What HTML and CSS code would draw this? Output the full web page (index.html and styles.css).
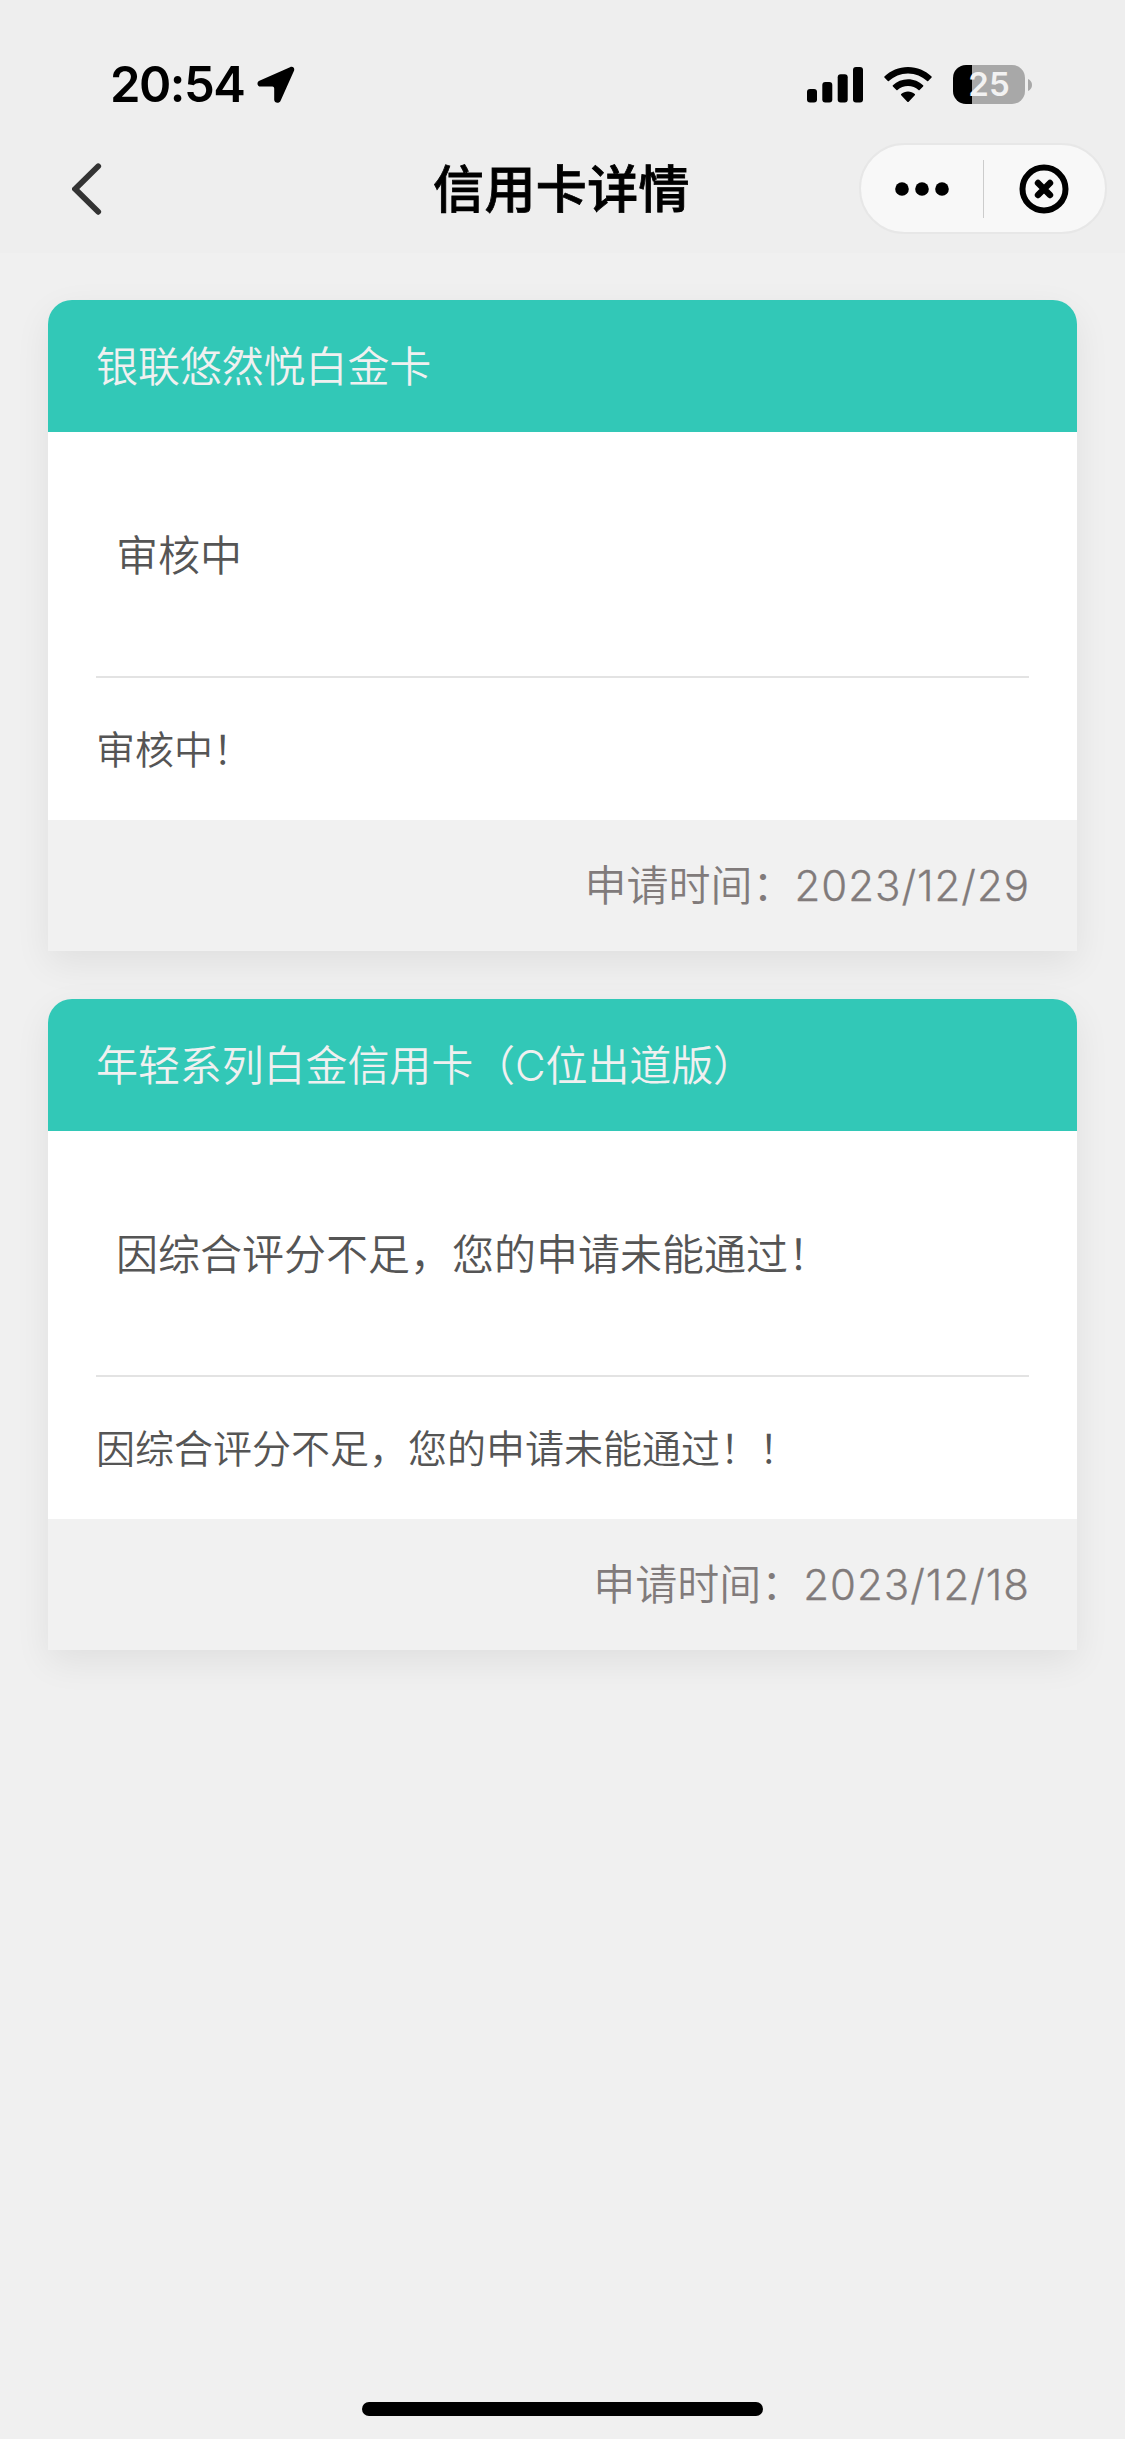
FILE: index.html
```html
<!DOCTYPE html>
<html lang="zh-CN">
<head>
<meta charset="utf-8">
<title>信用卡详情</title>
<link rel="stylesheet" href="styles.css">
</head>
<body>
<div class="screen">
  <header class="top">
    <div class="status-bar">
      <div class="status-left">
        <span class="time">20:54</span>
        <svg class="location" width="38" height="38" viewBox="0 0 38 38"><path d="M2.4 14.8 33 1.2C35.800 0 38 2 37 4.800L23.600 34.800C22.200 38 17.200 37.300 17.200 33.800V22.400Q17.200 20.600 15.400 20.600H3.600C0 20.600-.6 16.100 2.400 14.800Z"/></svg>
      </div>
      <div class="status-right">
        <svg width="56" height="36" viewBox="0 0 56 36"><rect x="0" y="22" width="10" height="13.500" rx="3"/><rect x="15.300" y="15" width="10" height="20.500" rx="3"/><rect x="30.700" y="7.300" width="10" height="28.200" rx="3"/><rect x="46" y="0" width="10" height="35.500" rx="3"/></svg>
        <svg width="48" height="36" viewBox="0 0 48 36"><path d="M24 0C14.800 0 6.500 3.700.4 9.600Q0 10.100.4 10.600L3.800 14.100Q4.300 14.600 4.900 14.100C9.900 9.400 16.600 6.500 24 6.500S38.100 9.400 43.100 14.100Q43.700 14.600 44.200 14.100L47.600 10.600Q48 10.100 47.600 9.600C41.500 3.700 33.200 0 24 0Z"/><path d="M24 12.300C18.200 12.300 12.900 14.600 8.900 18.300Q8.300 18.800 8.900 19.400L12.400 22.900Q12.900 23.400 13.500 22.900C16.300 20.400 20 18.900 24 18.900S31.700 20.400 34.500 22.900Q35.100 23.400 35.600 22.900L39.100 19.400Q39.700 18.800 39.100 18.300C35.100 14.600 29.800 12.300 24 12.300Z"/><path d="M24 24.500C21.400 24.500 19 25.500 17.200 27.100Q16.600 27.700 17.200 28.300L23.300 34.700Q24 35.400 24.700 34.700L30.800 28.300Q31.400 27.700 30.800 27.100C29 25.500 26.600 24.500 24 24.500Z"/></svg>
        <div class="battery">
          <div class="battery-body">25</div>
          <svg width="4" height="12" viewBox="0 0 4 12"><path d="M0 0Q4 1.800 4 6T0 12Z" fill="#a8a8a8"/></svg>
        </div>
      </div>
    </div>
    <nav class="nav">
      <svg class="back" width="30" height="52" viewBox="0 0 30 52"><path d="M26.200 3.300 3.200 26l23 22.800" fill="none" stroke="#333" stroke-width="5.800" stroke-linecap="round"/></svg>
      <h1 class="nav-title">信用卡详情</h1>
      <div class="capsule">
        <div class="capsule-item"><svg width="54" height="14" viewBox="0 0 54 14"><circle cx="7" cy="7" r="6.800"/><circle cx="27" cy="7" r="6.800"/><circle cx="47" cy="7" r="6.800"/></svg></div>
        <div class="capsule-item"><svg width="50" height="50" viewBox="0 0 50 50" fill="none" stroke="#000" stroke-linecap="round"><circle cx="25" cy="25" r="21.500" stroke-width="6"/><path d="m19 19 12 12m0-12L19 31" stroke-width="6.400"/></svg></div>
      </div>
    </nav>
  </header>
  <main class="cards">
    <section class="card">
      <h2 class="card-head">银联悠然悦白金卡</h2>
      <div class="card-body">
        <p class="result">审核中</p>
        <p class="detail">审核中！</p>
      </div>
      <div class="card-foot">申请时间：<span class="date">2023/12/29</span></div>
    </section>
    <section class="card">
      <h2 class="card-head">年轻系列白金信用卡（<span class="latin">C</span>位出道版）</h2>
      <div class="card-body">
        <p class="result">因综合评分不足，您的申请未能通过！</p>
        <p class="detail">因综合评分不足，您的申请未能通过！！</p>
      </div>
      <div class="card-foot">申请时间：<span class="date">2023/12/18</span></div>
    </section>
  </main>
  <div class="home-bar"></div>
</div>
</body>
</html>
```
FILE: styles.css
```css
* { box-sizing: border-box; margin: 0; padding: 0; }
body {
  background: #f0f0f0;
  font-family: "Noto Sans CJK SC", sans-serif;
  font-weight: 350;
  color: #555;
}
svg { display: block; flex: none; }
.screen {
  width: 1125px;
  height: 2439px;
  display: flex;
  flex-direction: column;
  align-items: center;
}
.top { width: 100%; height: 253px; background: #eee; flex: none; }
.status-bar {
  height: 143px;
  padding: 26px 93px 0 110px;
  display: flex;
  justify-content: space-between;
  align-items: center;
}
.status-left, .status-right, .battery { display: flex; align-items: center; }
.status-left { gap: 12px; }
.status-right { gap: 21px; }
.time {
  font: 600 49px/60px Inter, sans-serif;
  letter-spacing: -1.500px;
  color: #000;
  width: 135px;
  white-space: nowrap;
}
.battery { gap: 3px; }
.battery-body {
  width: 72px;
  height: 39px;
  border-radius: 13px;
  background: linear-gradient(90deg, #000 18.500px, #a8a8a8 18.500px);
  color: #f2f2f2;
  font: 600 33px/39px Inter, sans-serif;
  text-align: center;
}
.nav {
  height: 91px;
  padding: 0 18px 0 72px;
  display: grid;
  grid-template-columns: 246px 1fr 248px;
  align-items: center;
}
.nav-title {
  height: 91px;
  font-size: 51px;
  line-height: 86px;
  letter-spacing: .4px;
  font-weight: 500;
  -webkit-text-stroke: .8px #000;
  color: #000;
  width: 260px;
  margin-left: 115px;
  white-space: nowrap;
}
.capsule {
  height: 91px;
  border: 2px solid #e7e7e7;
  border-radius: 46px;
  background: #f8f8f8;
  display: flex;
  align-items: center;
}
.capsule-item { flex: 1; height: 58px; display: flex; align-items: center; justify-content: center; }
.capsule-item + .capsule-item { border-left: 1px solid #ccc; }
.cards {
  width: 1029px;
  margin-top: 47px;
  display: flex;
  flex-direction: column;
  gap: 48px;
}
.card {
  border-radius: 24px 24px 0 0;
  box-shadow: 0 12px 36px rgba(0, 0, 0, .07);
}
.card-head {
  height: 132px;
  padding: 0 48px;
  border-radius: 24px 24px 0 0;
  background: #32c8b7;
  color: #f0f0f0;
  font-size: 42px;
  line-height: 127px;
  letter-spacing: -.1px;
  font-weight: 350;
}
.latin { font-family: Inter, sans-serif; font-weight: 300; }
.card-body { background: #fff; padding: 0 48px; }
.result {
  height: 246px;
  padding-left: 20px;
  border-bottom: 2px solid #e3e3e3;
  font-size: 42px;
  line-height: 242px;
}
.detail { height: 142px; font-size: 39px; line-height: 138px; }
.card-foot {
  height: 131px;
  padding: 0 48px;
  background: #f1f1f1;
  color: #817b7b;
  font-size: 42px;
  line-height: 125px;
  text-align: right;
}
.date {
  font-family: Inter, sans-serif;
  font-weight: 300;
  letter-spacing: 1px;
  margin-right: -1px;
  -webkit-text-stroke: .3px #817b7b;
}
.home-bar {
  width: 401px;
  height: 14px;
  margin: auto 0 23px;
  border-radius: 7px;
  background: #000;
}
```
